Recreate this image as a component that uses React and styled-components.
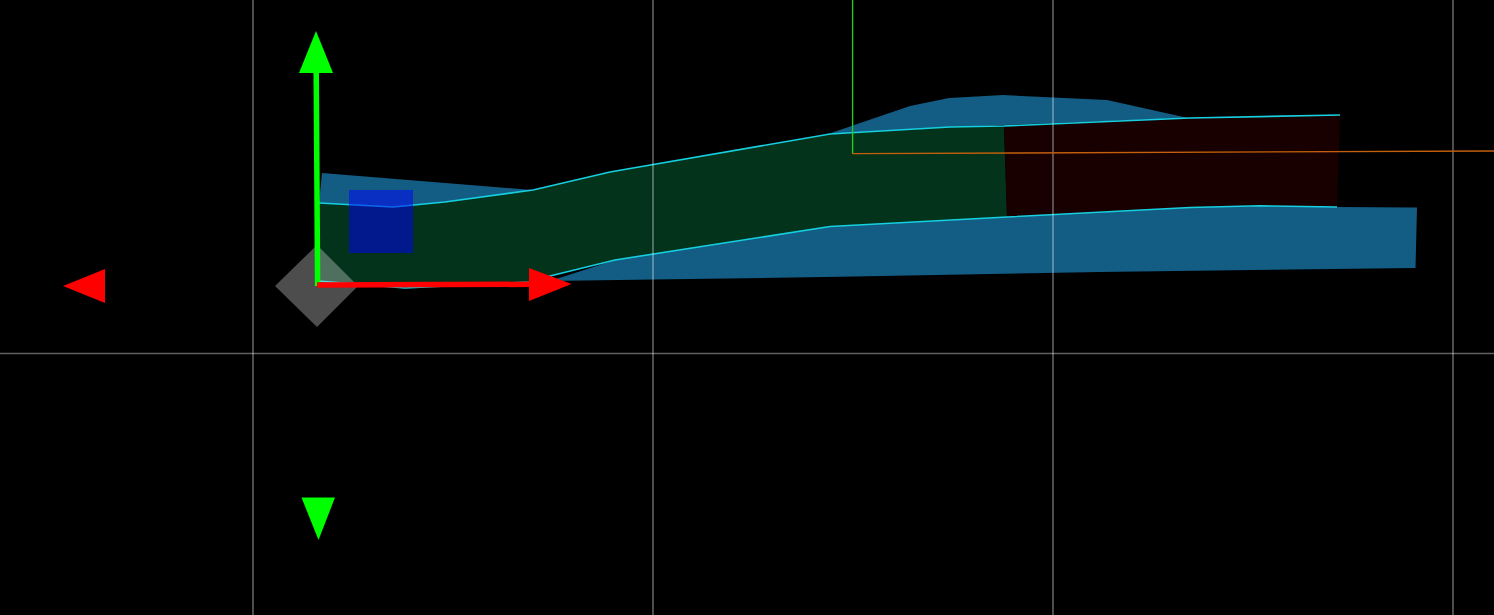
import React from 'react'
import styled, { createGlobalStyle } from 'styled-components'

const Global = createGlobalStyle`
  html, body { margin: 0; padding: 0; background: #000; overflow: hidden; }
`

const Viewport = styled.div`
  width: 1494px;
  height: 615px;
  background: #000;
`

const Scene = styled.svg`
  display: block;
  width: 100%;
  height: 100%;
`

const Surface = styled.polygon`
  fill: ${p => p.$fill};
  stroke: none;
`

const Edge = styled.polyline`
  fill: none;
  stroke: #16cfe0;
  stroke-width: 1.6;
`

const GridLine = styled.line`
  stroke: rgba(255, 255, 255, 0.38);
  stroke-width: 1.6;
`

const AxisLine = styled.line`
  stroke: ${p => p.$color};
  stroke-width: ${p => p.$width || 5.5};
`

const Head = styled.polygon`
  fill: ${p => p.$color};
`

const GREEN = '#00ff00'
const RED = '#ff0000'

const gridX = [253, 653, 1053, 1453]

const topEdge = '319,203 393,207 445,202 533,190 610,172 830,134 950,127 1004,126 1190,118 1340,115'
const lowEdge = '1337,207 1260,205.8 1190,207.5 1007,217 830,226.5 615,260 550,276 530,282 405,288 318,281'

export default function App() {
  return (
    <Viewport>
      <Global />
      <Scene viewBox="0 0 1494 615">
        {/* ground surfaces */}
        <Surface $fill="#135c84" points="322,173 533,190 445,202 393,207 319,203" />
        <Surface $fill="#135c84" points="828,134 910,106 949,98 1003,95 1107,100 1188,118 950,127" />
        <Surface $fill="#135c84" points="1417,207.5 1415.5,268 1100,272 840,276.8 653,279.5 550,281 615,260 830,226.5 1007,217 1190,207.5 1260,205.8 1337,207" />
        <Surface $fill="#03331a" points="319,203 393,207 445,202 533,190 610,172 830,134 950,127 1004,126 1007,217 830,226.5 615,260 550,276 530,282 405,288 318,281" />
        <Surface $fill="#190000" points="1004,126 1190,118 1340,115 1337,207 1260,205.8 1190,207.5 1007,217" />
        <Edge points={topEdge} />
        <Edge points={lowEdge} />

        {/* grid */}
        {gridX.map(x => <GridLine key={x} x1={x} y1="0" x2={x} y2="615" />)}
        <GridLine x1="0" y1="353.5" x2="1494" y2="353.5" />

        {/* second origin */}
        <AxisLine $color="#22cc22" $width={1.4} x1="852.6" y1="0" x2="852.6" y2="154" />
        <AxisLine $color="#c4600c" $width={1.4} x1="852" y1="153.6" x2="1494" y2="151" />

        {/* selected shape and handle */}
        <Surface $fill="rgba(0, 0, 255, 0.5)" points="349,190 413,190 413,253 349,253" />
        <Surface $fill="rgba(255, 255, 255, 0.3)" points="317,245 358,286 317,327 275,286" />

        {/* gizmo */}
        <AxisLine $color={GREEN} x1="316.2" y1="72" x2="317.6" y2="286" />
        <AxisLine $color={RED} x1="317" y1="285" x2="531" y2="284.3" />
        <Head $color={GREEN} points="316,31 299,73 333,73" />
        <Head $color={RED} points="571.5,284 529,268 529,301" />
        <Head $color={RED} points="63,286 105,269 105,303" />
        <Head $color={GREEN} points="301.5,497.5 335,497.5 318.5,540" />
      </Scene>
    </Viewport>
  )
}
